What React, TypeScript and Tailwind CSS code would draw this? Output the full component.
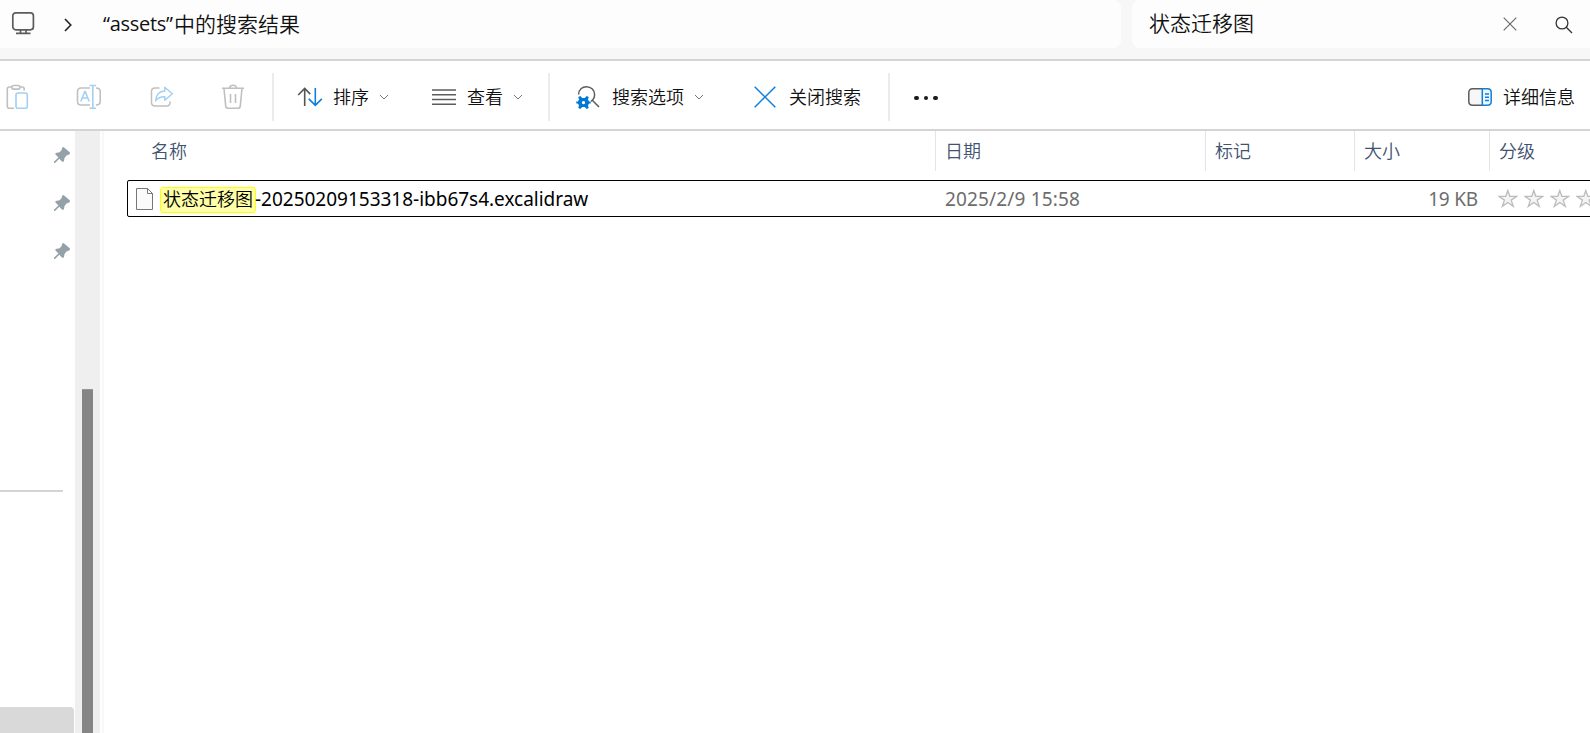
import type { ReactNode } from 'react';

const columns = [
  { label: '名称', className: 'w-[809px] pl-[24px]' },
  { label: '日期', className: 'w-[270px] pl-[9px]' },
  { label: '标记', className: 'w-[149px] pl-[9px]' },
  { label: '大小', className: 'w-[135px] pl-[9px]' },
  { label: '分级', className: 'w-[101px] pl-[9px]' },
];

function Divider() {
  return <div className="h-12 w-[2px] shrink-0 bg-[#ebebeb]" />;
}

function Chevron() {
  return (
    <svg width="10" height="6" viewBox="0 0 10 6" fill="none" stroke="#777" className="shrink-0">
      <path d="M1 1l4 4 4-4" />
    </svg>
  );
}

function MonitorIcon() {
  return (
    <svg width="24" height="24" viewBox="0 0 24 24" fill="none" stroke="#5c5c5c" strokeWidth="1.7" className="mb-[2px] shrink-0">
      <rect x="1.8" y="1.8" width="20.6" height="17" rx="3" />
      <path d="M9.5 19v3M15 19v3M5 22.3h14.5" />
    </svg>
  );
}

function PasteIcon() {
  return (
    <svg width="24" height="26" viewBox="0 0 24 26" fill="none" strokeWidth="1.6" className="shrink-0">
      <path d="M9 3H3.2C2 3 1.3 3.8 1.3 5v17.300c0 1.200.8 2 2 2H8M14 3h2.200c1.200 0 2 .8 2 2v1.500" stroke="#c0c0c0" />
      <rect x="5.800" y="1.500" width="8.200" height="3.600" rx="1.800" fill="#fff" stroke="#c0c0c0" />
      <rect x="10" y="9" width="11.300" height="15.300" rx="2" stroke="#a3d0f3" />
    </svg>
  );
}

function RenameIcon() {
  return (
    <svg width="26" height="26" viewBox="0 0 26 26" fill="none" strokeWidth="1.600" className="shrink-0">
      <path d="M14 4H5C2.700 4 1.500 5.500 1.500 7.500v10c0 2 1.200 3.500 3.500 3.500h9M20 4c2.500 0 4.200 1.200 4.200 3.500v10c0 2.300-1.700 3.500-4.200 3.500" stroke="#c0c0c0" />
      <path d="M13.500 1.500H20M13.500 24.300H20M16.800 1.500v22.800M4.800 17.500L8.800 7.500h.4l4 10M6.300 14h5.600" stroke="#a3d0f3" />
    </svg>
  );
}

function ShareIcon() {
  return (
    <svg width="24" height="22" viewBox="0 0 24 22" fill="none" strokeWidth="1.500" strokeLinejoin="round" className="shrink-0">
      <path d="M9.500 2H5C2.700 2 1.500 3.300 1.500 5.500v11C1.500 18.700 2.700 20 5 20h11.500c2.200 0 3.500-1.300 3.500-3.500v-1.300" stroke="#c0c0c0" />
      <path d="M14.800 1.300L22.300 7.700l-7.500 6.500v-3.500C10.500 10.600 7.500 12 5.600 14.800 6 9 9 5.200 14.800 4.900z" stroke="#a3d0f3" />
    </svg>
  );
}

function TrashIcon() {
  return (
    <svg width="24" height="26" viewBox="0 0 24 26" fill="none" stroke="#c0c0c0" strokeWidth="1.600" className="shrink-0">
      <path d="M1 4.300h22M8.500 4.300C8.500 2.300 10 1.300 12 1.300s3.500 1 3.500 3M3 4.500l1.700 17.300c.2 1.600 1 2.500 2.500 2.500h9.600c1.500 0 2.300-.9 2.500-2.500L21 4.500M9.500 10v9M14.500 10v9" />
    </svg>
  );
}

function SortIcon() {
  return (
    <svg width="26" height="20" viewBox="0 0 26 20" fill="none" strokeWidth="1.600" className="shrink-0">
      <path d="M7.700 19V1.500M1.200 8l6.500-6.500 5.600 5.600" stroke="#555" />
      <path d="M18.300 1v17.300M11.800 11.900l6.500 6.500 6.500-6.500" stroke="#0f7fdb" />
    </svg>
  );
}

function ViewIcon() {
  return (
    <svg width="24" height="18" viewBox="0 0 24 18" stroke="#5c5c5c" strokeWidth="1.500" className="shrink-0">
      <path d="M0 2h24M0 6.800h24M0 11.600h24M0 16.300h24" />
    </svg>
  );
}

function SearchOptionsIcon() {
  return (
    <svg width="24" height="24" viewBox="0 0 24 24" fill="none" className="shrink-0">
      <path d="M2.600 9.500C2.600 4.500 6.300 1.700 10.500 1.700c4.800 0 8.100 3.500 8.100 7.900 0 3.200-1.300 5.300-3.600 6.700M16.300 15.200L23 22" stroke="#5c5c5c" strokeWidth="1.500" />
      <path
        fillRule="evenodd"
        d="M4.300 11l1.900 2h2.600l1.900-2 2 1.100-.7 2.700 1.200 1.600h1.500v2.200h-1.500L12 20.200l.7 2.700-2 1.100-1.900-2H6.200l-1.900 2-2-1.100.7-2.700-1.200-1.600H.3v-2.200h1.500L3 14.800l-.7-2.700zM7.500 15.900a1.700 1.700 0 100 3.400 1.700 1.700 0 000-3.400z"
        fill="#0078d7"
      />
    </svg>
  );
}

function DetailsIcon() {
  return (
    <svg width="24" height="18" viewBox="0 0 24 18" fill="none" strokeWidth="1.500" className="shrink-0">
      <path d="M14 .8H4.500C2.200.8.800 2.200.8 4.500v9c0 2.300 1.400 3.700 3.700 3.700H14" fill="#f7f7f7" stroke="#5c5c5c" />
      <path d="M14.300.8h5.200c2.300 0 3.700 1.400 3.700 3.700v9c0 2.300-1.400 3.700-3.700 3.700h-5.200z" fill="#eef7fe" stroke="#0f7fdb" />
      <path d="M17 6h4M17 9.300h4M17 12.600h4" stroke="#0f7fdb" />
    </svg>
  );
}

function PinIcon() {
  return (
    <svg width="16" height="16" viewBox="0 0 16 16" fill="#95a1a8" className="shrink-0">
      <path d="M9.500 0l6.500 5.600-.3 1.700-3.200 1.200-2 2.500-.6 3.600-1.700.2-2.900-3L1 16l-1 .1v-1.300l4.400-4.400L1.300 7.300l.3-1.400 4-.6 2-2.300.7-2.500z" />
    </svg>
  );
}

function Star() {
  return (
    <svg width="20" height="19" viewBox="0 0 20 19" fill="#f4f4f4" stroke="#bcbcbc" strokeWidth="1.300" className="shrink-0">
      <path d="M9.800 1.500l2 5.800h7l-5.600 3.800 2.100 6.300-5.500-3.900-5.500 3.900 2.100-6.300L.8 7.300h7z" />
    </svg>
  );
}

function ToolLabel({ children }: { children: ReactNode }) {
  return <span className="whitespace-nowrap text-[18px] leading-6 text-[#111]">{children}</span>;
}

function AddressBar() {
  return (
    <header className="flex h-[61px] shrink-0 gap-[11px] border-b-2 border-[#d4d4d4] bg-[#f7f7f7]">
      <div className="flex h-12 w-[1121px] items-center rounded-r-lg bg-[#fdfdfd] pl-[11px]">
        <MonitorIcon />
        <svg width="8" height="14" viewBox="0 0 8 14" fill="none" stroke="#222" strokeWidth="1.600" className="ml-[29px] mt-[2px]">
          <path d="M1 1l5.800 6L1 13" />
        </svg>
        <div className="ml-[31px] flex whitespace-nowrap text-[21px] leading-7 text-[#111]">
          <span className="w-[71px] font-['Open_Sans'] text-[20px] font-normal tracking-[-0.3px]">“assets”</span>
          <span>中的搜索结果</span>
        </div>
      </div>
      <div className="flex h-12 flex-1 items-center rounded-l-lg bg-[#fdfdfd] pl-[17px]">
        <span className="flex-1 pb-[2px] text-[21px] leading-7 text-[#111]">状态迁移图</span>
        <svg width="14" height="14" viewBox="0 0 14 14" stroke="#666" strokeWidth="1.100" className="mb-px">
          <path d="M.7.7l12.600 12.600M13.300.7L.7 13.300" />
        </svg>
        <svg width="18" height="18" viewBox="0 0 18 18" fill="none" stroke="#333" strokeWidth="1.300" className="ml-[38px] mr-[17px] mt-[2px]">
          <circle cx="7" cy="7" r="5.900" />
          <path d="M11.300 11.300L17 17" />
        </svg>
      </div>
    </header>
  );
}

function Toolbar() {
  return (
    <div className="flex h-[70px] shrink-0 items-center border-b-2 border-[#d4d4d4] bg-white pl-[6px] pt-1">
      <div className="flex w-[266px] items-center">
        <PasteIcon />
        <div className="ml-[46px]"><RenameIcon /></div>
        <div className="ml-[48px]"><ShareIcon /></div>
        <div className="ml-[47px]"><TrashIcon /></div>
      </div>
      <Divider />
      <div className="flex w-[274px] items-center pl-[23px]">
        <SortIcon />
        <div className="ml-[10px] mr-[10px] flex"><ToolLabel>排序</ToolLabel></div>
        <Chevron />
        <div className="ml-[43px] mr-[11px]"><ViewIcon /></div>
        <ToolLabel>查看</ToolLabel>
        <div className="ml-[10px]"><Chevron /></div>
      </div>
      <Divider />
      <div className="flex w-[338px] items-center pl-[26px]">
        <SearchOptionsIcon />
        <div className="ml-[12px] mr-[10px] flex"><ToolLabel>搜索选项</ToolLabel></div>
        <Chevron />
        <svg width="22" height="22" viewBox="0 0 22 22" stroke="#0f7fdb" strokeWidth="1.500" className="ml-[50px] mr-[13px] shrink-0">
          <path d="M.7.7l20.600 20.600M21.300.7L.7 21.300" />
        </svg>
        <ToolLabel>关闭搜索</ToolLabel>
      </div>
      <Divider />
      <div className="ml-[24px] mt-[2px] flex gap-[5px]">
        <span className="size-[4.500px] rounded-full bg-[#1b1b1b]" />
        <span className="size-[4.500px] rounded-full bg-[#1b1b1b]" />
        <span className="size-[4.500px] rounded-full bg-[#1b1b1b]" />
      </div>
      <div className="ml-auto mr-[15px] flex items-center gap-[11px]">
        <DetailsIcon />
        <ToolLabel>详细信息</ToolLabel>
      </div>
    </div>
  );
}

function Sidebar() {
  return (
    <aside className="flex w-[104px] shrink-0 border-r-2 border-[#f8f8f8]">
      <div className="flex w-[75px] flex-col">
        <div className="flex flex-col items-end gap-8 pr-[5px] pt-4">
          <PinIcon />
          <PinIcon />
          <PinIcon />
        </div>
        <div className="mt-[231px] h-[2px] w-[63px] bg-[#d4d4d4]" />
        <div className="mt-auto h-[26px] w-[74px] rounded-tr-sm bg-[#d9d9d9]" />
      </div>
      <div className="flex w-[25px] items-end justify-center bg-[#efefef]">
        <div className="h-[344px] w-[11px] border-t border-[#969696] bg-[#858585]" />
      </div>
    </aside>
  );
}

function FileList() {
  return (
    <main className="min-w-0 flex-1 overflow-hidden pl-[23px]">
      <div className="flex h-10">
        {columns.map((col) => (
          <div
            key={col.label}
            className={`${col.className} shrink-0 border-r border-[#e5e5e5] pt-[8px] text-[18px] leading-6 text-[#3f5470] last:border-r-0`}
          >
            {col.label}
          </div>
        ))}
      </div>
      {/* Row runs past the right edge of the window */}
      <div className="mt-[9px] flex h-[37px] w-[1520px] items-center rounded-[2px] border border-black text-[19px] font-normal leading-6 text-[#6d6d6d]">
        <div className="flex w-[817px] shrink-0 items-center pl-2">
          <svg width="17" height="22" viewBox="0 0 17 22" fill="#fafafa" stroke="#777" className="shrink-0">
            <path d="M.5.500h11l5 5v16H.5zM11.500.500v5h5" />
          </svg>
          <span className="ml-[7px] mt-[2px] flex h-[26px] w-24 items-center justify-center rounded-[3px] border border-[#ffff00] bg-[#ffffa8] pb-[2px] text-[18px] font-[350] text-black">
            状态迁移图
          </span>
          <span className="ml-[-1px] whitespace-nowrap tracking-[-0.015px] text-black">-20250209153318-ibb67s4.excalidraw</span>
        </div>
        <span className="w-[270px] shrink-0 whitespace-nowrap tracking-[0.15px]">2025/2/9 15:58</span>
        <span className="w-[263px] shrink-0 text-right tracking-[-0.2px]">19 KB</span>
        <div className="ml-[20px] flex gap-[6px]">
          {[1, 2, 3, 4, 5].map((n) => (
            <Star key={n} />
          ))}
        </div>
      </div>
    </main>
  );
}

export default function App() {
  return (
    <div className="flex h-[733px] w-[1590px] flex-col overflow-hidden bg-white font-['Noto_Sans','Noto_Sans_CJK_SC',sans-serif] font-[350]">
      <AddressBar />
      <Toolbar />
      <div className="flex min-h-0 flex-1">
        <Sidebar />
        <FileList />
      </div>
    </div>
  );
}
